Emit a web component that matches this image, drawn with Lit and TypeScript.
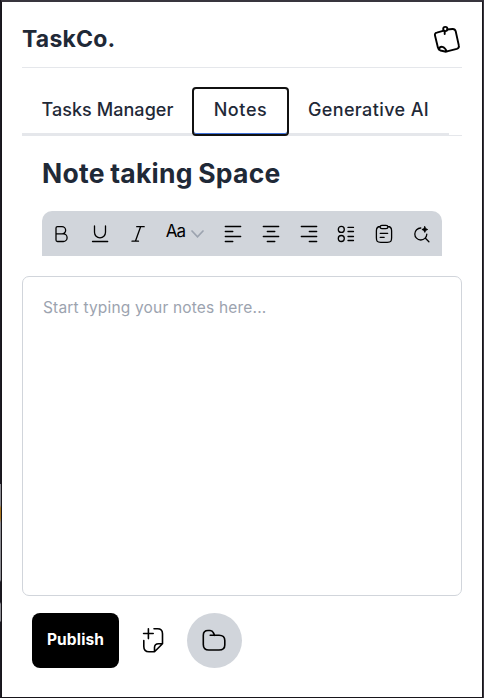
import { LitElement, html, css, svg } from "lit";
import { customElement, state } from "lit/decorators.js";

const stroke = (body: unknown, cls = "icon") =>
  html`<svg class=${cls} viewBox="0 0 24 24" fill="none" stroke="currentColor" stroke-width="1.3" stroke-linecap="round" stroke-linejoin="round">${body}</svg>`;

const bold = svg`<path d="M7 12V6Q7 4.6 8.5 4.6H13a3.65 3.65 0 0 1 0 7.3H7V18Q7 19.5 8.5 19.5H14.3a3.8 3.8 0 0 0 0-7.6H12"/>`;
const underline = svg`<path d="M7.5 4v6.3a5.5 5.5 0 0 0 11 0V4M5.5 19.5h15.2"/>`;
const italic = svg`<path d="M11.7 4.7h7.5M15.6 4.7 10.5 19M7 19.2H13.5"/>`;
const left = svg`<path d="M5.3 4.5h15.4M5.3 9.5h7.5M5.3 14.5h15.4M5.3 19.5h7.5"/>`;
const center = svg`<path d="M5.3 4.5h15.4M9.3 9.5h7.5M5.3 14.5h15.4M9.3 19.5h7.5"/>`;
const right = svg`<path d="M5.3 4.5h15.4M13.3 9.5h7.4M5.3 14.5h15.4M13.3 19.5h7.4"/>`;
const list = svg`<circle cx="7.3" cy="7.4" r="3"/><circle cx="7.3" cy="16.5" r="3"/><path d="M14 5.4h5.5M14 9.5h5.5M14 14.5h5.5M14 18.5h5.5"/>`;
const clip = svg`<path d="M8.2 4.5C5.3 4.6 4.4 5.7 4.4 8.7V15.8c0 3.5.8 4.5 4.3 4.5h6.6c3.5 0 4.3-1 4.3-4.5V8.7c0-3-.9-4.1-3.8-4.2M10 3.4h4c1.8 0 1.9.8 1.9 1.6S15.6 6.6 14 6.6h-4C8.4 6.6 8.1 5.8 8.1 5S8.4 3.4 10 3.4ZM8.2 11.3h7.5M8.2 15.3h4"/>`;
const search = svg`<path d="M10.8 6A6 6 0 1 0 16.8 12.2M15.2 16l3.7 3.7"/><path fill="currentColor" stroke-width=".8" d="M14.8 4.6l.9 2 2 .9-2 .9-.9 2-.9-2-2-.9 2-.9Z"/>`;

@customElement("app-root")
export class AppRoot extends LitElement {
  @state() private tab = 1;

  static styles = css`
    :host {
      display: block;
      padding: 1px 1px 0;
      background: linear-gradient(#1c1a22 0 484px, #8b8b92 484px 505px, #a8741f 508px 518px, #8b8b92 523px 580px, #1c1a22 582px 602px, #8b8b92 604px 621px, #1c1a22 622px) 0 0 / 1px 100% no-repeat, #38353d;
    }
    * { box-sizing: border-box; }
    .window {
      height: 697px;
      padding: 0 20px;
      background: #fff;
      color: #1f2937;
      border: 1px solid #17151a;
      border-top-color: #38353d;
      font-family: Inter, "Open Sans", sans-serif;
    }
    header {
      height: 66px;
      display: flex;
      align-items: center;
      justify-content: space-between;
      border-bottom: 1px solid #e5e7eb;
      padding-top: 9px;
    }
    .brand { font-size: 23px; font-weight: 700; letter-spacing: .2px; line-height: 30px; }
    .pin { width: 30px; height: 32px; color: #000; }
    nav { height: 49px; margin-top: 19px; display: flex; border-bottom: 1px solid #e5e7eb; }
    .tab {
      height: 49px;
      border: 0;
      border-bottom: 3px solid #e5e7eb;
      background: none;
      padding: 0;
      font: 500 18px/44px Inter, sans-serif;
      color: #1f2937;
      text-align: center;
      white-space: nowrap;
    }
    .tasks { width: 170px; padding-left: 1px; letter-spacing: .06px; }
    .notes { width: 97px; letter-spacing: .6px; }
    .ai { width: 160px; padding-right: 1px; letter-spacing: .38px; }
    .active {
      line-height: 42px;
      padding-bottom: 3px;
      border: 2px solid #111;
      border-radius: 4px;
      box-shadow: inset 0 -1px #3f72dc;
    }
    h1 { margin: 20px 20px 0; height: 35px; font-size: 26.5px; line-height: 34px; font-weight: 700; letter-spacing: .25px; word-spacing: -1px; white-space: nowrap; }
    .toolbar {
      margin: 20px 20px 0;
      height: 45px;
      display: flex;
      align-items: center;
      background: #d1d5db;
      border-radius: 10px 10px 0 0;
      color: #000;
    }
    .tool { width: 38px; display: flex; justify-content: center; }
    .case { width: 57px; padding-left: 1px; display: flex; align-items: center; justify-content: center; gap: 6px; }
    .aa { font-size: 17px; font-weight: 400; line-height: 20px; letter-spacing: -1px; margin-bottom: 5px; }
    .chevron { width: 13px; height: 8px; color: #9ca3af; }
    .icon { width: 24px; height: 24px; display: block; }
    textarea {
      display: block;
      width: 440px;
      height: 320px;
      margin-top: 20px;
      padding: 20px;
      border: 1px solid #d1d5db;
      border-radius: 7px;
      resize: none;
      outline: 0;
      background: #fff;
      font: 400 15.5px/22px Inter, sans-serif;
      letter-spacing: .18px;
    }
    textarea::placeholder { color: #9ca3af; opacity: 1; }
    .actions { display: flex; align-items: center; margin: 17px 10px 0; height: 55px; color: #000; }
    .publish {
      width: 87px;
      height: 55px;
      padding: 0 0 2px;
      border: 0;
      border-radius: 8px;
      background: #000;
      color: #fff;
      font: 700 15.5px/20px Inter, sans-serif;
      letter-spacing: .15px;
    }
    .add { width: 68px; padding: 0 1px 2px 0; display: flex; justify-content: center; }
    .folder { width: 55px; height: 55px; padding: 0 1px 1px 0; border-radius: 50%; background: #d1d5db; display: grid; place-items: center; }
    .large { width: 26px; height: 28px; display: block; }
  `;

  private tabItem(index: number, name: string, label: string) {
    return html`<button class="tab ${name} ${this.tab === index ? "active" : ""}" @click=${() => (this.tab = index)}>${label}</button>`;
  }

  render() {
    return html`
      <div class="window">
        <header>
          <div class="brand">TaskCo.</div>
          <svg class="pin" viewBox="0 0 30 32" fill="none" stroke="currentColor" stroke-width="1.9" stroke-linecap="round" stroke-linejoin="round">
            <path d="M11 7.8 4.8 9.6Q2.4 10.2 3 12.6L5.9 24.4Q6.5 26.9 8.5 27.5L14 28.7 24.8 25.8Q27.5 24.9 26.8 22.4L23.7 8.3Q23 5.8 20.4 6L15.5 6.5M6.8 26.6C8 22.4 12.5 22.9 14.8 28.6M12.7 8.5V11"/>
            <circle cx="13.3" cy="6" r="2.1"/>
          </svg>
        </header>
        <nav>${this.tabItem(0, "tasks", "Tasks Manager")}${this.tabItem(1, "notes", "Notes")}${this.tabItem(2, "ai", "Generative AI")}</nav>
        <h1>Note taking Space</h1>
        <div class="toolbar">
          ${[bold, underline, italic].map((i) => html`<div class="tool">${stroke(i)}</div>`)}
          <div class="case">
            <span class="aa">Aa</span>
            <svg class="chevron" viewBox="0 0 13 8" fill="none" stroke="currentColor" stroke-width="1.7" stroke-linecap="round"><path d="m1 1 5.5 5.8L12 1"/></svg>
          </div>
          ${[left, center, right, list, clip, search].map((i) => html`<div class="tool">${stroke(i)}</div>`)}
        </div>
        <textarea placeholder="Start typing your notes here..."></textarea>
        <div class="actions">
          <button class="publish">Publish</button>
          <div class="add">
            <svg class="large" viewBox="0 0 26 28" fill="none" stroke="currentColor" stroke-width="1.6" stroke-linecap="round" stroke-linejoin="round">
              <path d="M3.6 7.5h9.6M8.4 2.8v9.8M14 2.7h3.5q5 0 5 5v10.1L14.5 25.8H9q-5.2 0-5.2-5.2V14.5M22.5 17.8h-4q-4 0-4 4v4"/>
            </svg>
          </div>
          <div class="folder">
            <svg class="large" viewBox="0 0 26 28" fill="none" stroke="currentColor" stroke-width="1.6" stroke-linecap="round" stroke-linejoin="round">
              <path d="M9.2 9.3H18q5.8 0 5.8 5.2v4.5q0 5-5.8 5H7.8Q2.3 24 2.3 18.5V9.2Q2.3 4.5 7 4.5h2.2q2.2 0 3 2L13.7 9.3"/>
            </svg>
          </div>
        </div>
      </div>
    `;
  }
}
